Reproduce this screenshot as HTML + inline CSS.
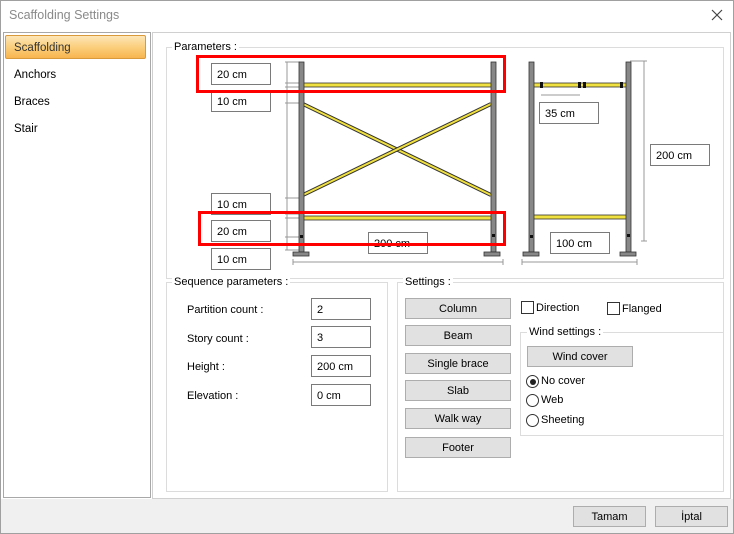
<!DOCTYPE html>
<html><head><style>
*{margin:0;padding:0;box-sizing:border-box}
body{width:734px;height:534px;background:#fff;font-family:"Liberation Sans",sans-serif;font-size:11px;color:#000;position:relative;overflow:hidden}
.a{position:absolute}
.win{left:0;top:0;width:734px;height:534px;border:1px solid #a0a0a0}
.title{left:9px;top:8px;font-size:12.5px;color:#8a8a8a}
.list{left:3px;top:32px;width:148px;height:466px;border:1px solid #a8a8a8;background:#fff}
.sel{left:5px;top:35px;width:141px;height:24px;border:1px solid #d99a3c;border-radius:2px;background:linear-gradient(#fde6b8,#fbcf7d 50%,#f8b550);padding:6px 8px;font-size:11.5px;color:#333}
.li{left:14px;font-size:11.5px}
.main{left:152px;top:32px;width:579px;height:467px;border:1px solid #d0d0d0;background:#fff}
.bot{left:1px;top:499px;width:732px;height:34px;background:#f0f0f0}
.grp{border:1px solid #dcdcdc}
.gl{background:#fff;padding:0 2px;font-size:11px}
.box{border:1px solid #7a7a7a;background:#fff;padding:5px 5px;font-size:11px;height:22px}
.btn{border:1px solid #adadad;background:#e1e1e1;text-align:center;font-size:11px;line-height:21px}
.cb{width:13px;height:13px;border:1px solid #333;background:#fff}
.rd{width:13px;height:13px;border:1px solid #333;border-radius:50%;background:#fff}
</style></head><body>
<div class="a win"></div>
<div class="a title">Scaffolding Settings</div>
<svg class="a" style="left:711px;top:9px" width="12" height="12"><path d="M1 1L11 11M11 1L1 11" stroke="#444" stroke-width="1.2"/></svg>
<div class="a list"></div>
<div class="a sel">Scaffolding</div>
<div class="a li" style="top:69px">Anchors</div>
<div class="a li" style="top:96px">Braces</div>
<div class="a li" style="top:123px">Stair</div>
<div class="a main"></div>
<div class="a bot"></div>

<div class="a grp" style="left:166px;top:47px;width:558px;height:232px"></div>
<div class="a gl" style="left:172px;top:41px">Parameters :</div>
<div class="a grp" style="left:166px;top:282px;width:222px;height:210px"></div>
<div class="a gl" style="left:172px;top:276px">Sequence parameters :</div>
<div class="a grp" style="left:397px;top:282px;width:327px;height:210px"></div>
<div class="a gl" style="left:403px;top:276px">Settings :</div>

<svg class="a" style="left:0;top:0" width="734" height="534">
<g stroke="#999" stroke-width="1" fill="none">
<line x1="287" y1="62" x2="287" y2="250"/>
<line x1="285" y1="62" x2="300" y2="62"/><line x1="285" y1="83" x2="300" y2="83"/><line x1="285" y1="87" x2="300" y2="87"/><line x1="285" y1="103" x2="300" y2="103"/>
<line x1="285" y1="198" x2="300" y2="198"/><line x1="285" y1="214" x2="300" y2="214"/><line x1="285" y1="218" x2="300" y2="218"/><line x1="285" y1="237" x2="300" y2="237"/><line x1="285" y1="250" x2="300" y2="250"/>
<line x1="293" y1="262" x2="503" y2="262"/><line x1="293" y1="259" x2="293" y2="265"/><line x1="503" y1="259" x2="503" y2="265"/>
<line x1="522" y1="262" x2="637" y2="262"/><line x1="522" y1="259" x2="522" y2="265"/><line x1="637" y1="259" x2="637" y2="265"/>
<line x1="541" y1="95" x2="580" y2="95"/>
<line x1="644" y1="61" x2="644" y2="241"/><line x1="630" y1="61" x2="647" y2="61"/><line x1="641" y1="241" x2="647" y2="241"/>
</g>
<g stroke="#333" stroke-width="0.8">
<line x1="303" y1="104" x2="491" y2="195" stroke-width="4"/><line x1="303" y1="104" x2="491" y2="195" stroke="#f0e040" stroke-width="2"/>
<line x1="303" y1="195" x2="491" y2="104" stroke-width="4"/><line x1="303" y1="195" x2="491" y2="104" stroke="#f0e040" stroke-width="2"/>
</g>
<g stroke="#333" stroke-width="0.8">
<rect x="302" y="83" width="190" height="4" fill="#f0e040"/>
<rect x="302" y="216" width="190" height="4" fill="#f0e040"/>
<rect x="532" y="83" width="96" height="4" fill="#f0e040"/>
<rect x="532" y="215" width="96" height="4" fill="#f0e040"/>
<rect x="299" y="62" width="5" height="190" fill="#888"/>
<rect x="491" y="62" width="5" height="190" fill="#888"/>
<rect x="529" y="62" width="5" height="190" fill="#888"/>
<rect x="626" y="62" width="5" height="190" fill="#888"/>
<rect x="293" y="252" width="16" height="4" fill="#888"/>
<rect x="484" y="252" width="16" height="4" fill="#888"/>
<rect x="523" y="252" width="16" height="4" fill="#888"/>
<rect x="620" y="252" width="16" height="4" fill="#888"/>
</g>
<g fill="#111">
<rect x="300" y="235" width="3" height="3"/><rect x="492" y="234" width="3" height="3"/>
<rect x="530" y="235" width="3" height="3"/><rect x="627" y="234" width="3" height="3"/>
<rect x="540" y="82" width="3" height="6"/><rect x="578" y="82" width="3" height="6"/><rect x="583" y="82" width="3" height="6"/><rect x="620" y="82" width="3" height="6"/>
</g>
</svg>

<div class="a box" style="left:211px;top:63px;width:60px">20 cm</div>
<div class="a box" style="left:211px;top:90px;width:60px">10 cm</div>
<div class="a box" style="left:211px;top:193px;width:60px">10 cm</div>
<div class="a box" style="left:211px;top:220px;width:60px">20 cm</div>
<div class="a box" style="left:211px;top:248px;width:60px">10 cm</div>
<div class="a box" style="left:368px;top:232px;width:60px">200 cm</div>
<div class="a box" style="left:539px;top:102px;width:60px">35 cm</div>
<div class="a box" style="left:650px;top:144px;width:60px">200 cm</div>
<div class="a box" style="left:550px;top:232px;width:60px">100 cm</div>

<div class="a" style="left:196px;top:55px;width:310px;height:38px;border:3px solid #f00"></div>
<div class="a" style="left:198px;top:211px;width:308px;height:35px;border:3px solid #f00"></div>

<div class="a" style="left:187px;top:304px">Partition count :</div>
<div class="a" style="left:187px;top:333px">Story count :</div>
<div class="a" style="left:187px;top:361px">Height :</div>
<div class="a" style="left:187px;top:390px">Elevation :</div>
<div class="a box" style="left:311px;top:298px;width:60px">2</div>
<div class="a box" style="left:311px;top:326px;width:60px">3</div>
<div class="a box" style="left:311px;top:355px;width:60px">200 cm</div>
<div class="a box" style="left:311px;top:384px;width:60px">0 cm</div>

<div class="a btn" style="left:405px;top:298px;width:106px;height:21px">Column</div>
<div class="a btn" style="left:405px;top:325px;width:106px;height:21px">Beam</div>
<div class="a btn" style="left:405px;top:353px;width:106px;height:21px">Single brace</div>
<div class="a btn" style="left:405px;top:380px;width:106px;height:21px">Slab</div>
<div class="a btn" style="left:405px;top:408px;width:106px;height:21px">Walk way</div>
<div class="a btn" style="left:405px;top:437px;width:106px;height:21px">Footer</div>

<div class="a cb" style="left:521px;top:301px"></div><div class="a" style="left:536px;top:302px">Direction</div>
<div class="a cb" style="left:607px;top:302px"></div><div class="a" style="left:622px;top:303px">Flanged</div>

<div class="a grp" style="left:520px;top:332px;width:204px;height:104px;border-right:none"></div>
<div class="a gl" style="left:527px;top:326px">Wind settings :</div>
<div class="a btn" style="left:527px;top:346px;width:106px;height:21px">Wind cover</div>
<div class="a rd" style="left:526px;top:375px"></div><div class="a" style="left:529.5px;top:378.5px;width:6px;height:6px;border-radius:50%;background:#222"></div>
<div class="a" style="left:541px;top:375px">No cover</div>
<div class="a rd" style="left:526px;top:394px"></div><div class="a" style="left:541px;top:394px">Web</div>
<div class="a rd" style="left:526px;top:414px"></div><div class="a" style="left:541px;top:414px">Sheeting</div>

<div class="a btn" style="left:573px;top:506px;width:73px;height:21px">Tamam</div>
<div class="a btn" style="left:655px;top:506px;width:73px;height:21px">İptal</div>
</body></html>
